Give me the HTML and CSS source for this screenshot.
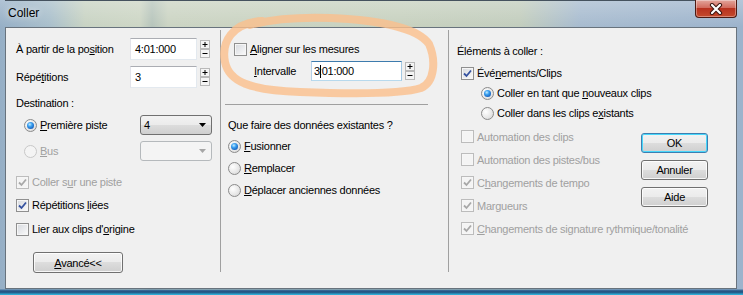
FILE: index.html
```html
<!DOCTYPE html>
<html lang="fr">
<head>
  <meta charset="UTF-8" />
  <meta name="viewport" content="width=device-width, initial-scale=1.0" />
  <title>Coller</title>
  <link rel="stylesheet" href="styles.css">
</head>
<body>
  <div class="window">
    <div class="titlebar">
      <span class="title">Coller</span>
      <div class="close-btn">
        <svg width="14" height="12" viewBox="0 0 14 12">
          <path d="M3 2 L11 10 M11 2 L3 10" stroke="#3b1510" stroke-width="4.2" stroke-linecap="round" fill="none"/>
          <path d="M3 2 L11 10 M11 2 L3 10" stroke="#ffffff" stroke-width="2.2" stroke-linecap="round" fill="none"/>
        </svg>
      </div>
    </div>

    <div class="client">
      <div class="col col-left">
        <div class="row field-row">
          <span class="field-label">À partir de la po<u>s</u>ition</span>
          <div class="textbox">4:01:000</div>
          <svg class="spin" width="10" height="18" viewBox="0 0 10 18">
            <rect x="0.5" y="0.5" width="9" height="8" fill="#f4f4f4" stroke="#b9b9b9"/>
            <rect x="0.5" y="9.5" width="9" height="8" fill="#f4f4f4" stroke="#b9b9b9"/>
            <path d="M5 2v5M2.5 4.5h5M2.5 13.5h5" stroke="#000" stroke-width="1"/>
          </svg>
        </div>
        <div class="row field-row mt4">
          <span class="field-label">Répé<u>t</u>itions</span>
          <div class="textbox">3</div>
          <svg class="spin" width="10" height="18" viewBox="0 0 10 18">
            <rect x="0.5" y="0.5" width="9" height="8" fill="#f4f4f4" stroke="#b9b9b9"/>
            <rect x="0.5" y="9.5" width="9" height="8" fill="#f4f4f4" stroke="#b9b9b9"/>
            <path d="M5 2v5M2.5 4.5h5M2.5 13.5h5" stroke="#000" stroke-width="1"/>
          </svg>
        </div>
        <div class="row caption mt4"><span>Destination :</span></div>
        <div class="row dest-row mt1">
          <span class="opt"><span class="radio on"></span><span><u>P</u>remière piste</span></span>
          <div class="combo">
            <span>4</span>
            <svg width="7" height="4" viewBox="0 0 7 4"><polygon points="0,0 7,0 3.5,4" fill="#000"/></svg>
          </div>
        </div>
        <div class="row dest-row mt4 disabled">
          <span class="opt"><span class="radio"></span><span><u>B</u>us</span></span>
          <div class="combo">
            <span></span>
            <svg width="7" height="4" viewBox="0 0 7 4"><polygon points="0,0 7,0 3.5,4" fill="#a6a6a6"/></svg>
          </div>
        </div>
        <div class="row mt9 disabled">
          <span class="check"><svg viewBox="0 0 11 11"><path d="M2 5.5 L4.5 8 L9 2.5"/></svg></span>
          <span>Coller s<u>u</u>r une piste</span>
        </div>
        <div class="row mt1">
          <span class="check"><svg viewBox="0 0 11 11"><path d="M2 5.5 L4.5 8 L9 2.5"/></svg></span>
          <span>Répétitions <u>l</u>iées</span>
        </div>
        <div class="row mt2">
          <span class="check"></span>
          <span>Lier aux clips d'<u>o</u>rigine</span>
        </div>
        <button class="btn btn-advanced"><u>A</u>vancé&lt;&lt;</button>
      </div>

      <div class="divider"></div>

      <div class="col col-mid">
        <div class="row align-row">
          <span class="check"></span>
          <span><u>A</u>ligner sur les mesures</span>
        </div>
        <div class="row interval-row">
          <span class="interval-label"><u>I</u>ntervalle</span>
          <div class="textbox focused"><span>3</span><span class="caret"></span><span>:01:000</span></div>
          <svg class="spin" width="10" height="18" viewBox="0 0 10 18">
            <rect x="0.5" y="0.5" width="9" height="8" fill="#f4f4f4" stroke="#b9b9b9"/>
            <rect x="0.5" y="9.5" width="9" height="8" fill="#f4f4f4" stroke="#b9b9b9"/>
            <path d="M5 2v5M2.5 4.5h5M2.5 13.5h5" stroke="#000" stroke-width="1"/>
          </svg>
        </div>
        <div class="hline"></div>
        <div class="row caption mt10"><span>Que faire des données existantes ?</span></div>
        <div class="row"><span class="radio on"></span><span><u>F</u>usionner</span></div>
        <div class="row"><span class="radio"></span><span><u>R</u>emplacer</span></div>
        <div class="row"><span class="radio"></span><span><u>D</u>éplacer anciennes données</span></div>
      </div>

      <div class="divider"></div>

      <div class="col col-right">
        <div class="row caption"><span>Éléments à coller :</span></div>
        <div class="row tight mt2 indent-check">
          <span class="check"><svg viewBox="0 0 11 11"><path d="M2 5.5 L4.5 8 L9 2.5"/></svg></span>
          <span>Évé<u>n</u>ements/Clips</span>
        </div>
        <div class="row tight indent-radio"><span class="radio on"></span><span>Coller en tant que <u>n</u>ouveaux clips</span></div>
        <div class="row tight indent-radio"><span class="radio"></span><span>Coller dans les clips e<u>x</u>istants</span></div>

        <div class="paste-grid">
          <div class="row disabled"><span class="check"></span><span>Automation des clips</span></div>
          <div class="buttons">
            <button class="btn btn-default">OK</button>
            <button class="btn">Annuler</button>
            <button class="btn">Aide</button>
          </div>
          <div class="row disabled"><span class="check"></span><span>Automation des pistes/bus</span></div>
          <div class="row disabled">
            <span class="check"><svg viewBox="0 0 11 11"><path d="M2 5.5 L4.5 8 L9 2.5"/></svg></span>
            <span>C<u>h</u>angements de tempo</span>
          </div>
          <div class="row disabled">
            <span class="check"><svg viewBox="0 0 11 11"><path d="M2 5.5 L4.5 8 L9 2.5"/></svg></span>
            <span>Margueurs</span>
          </div>
          <div class="row disabled wide">
            <span class="check"><svg viewBox="0 0 11 11"><path d="M2 5.5 L4.5 8 L9 2.5"/></svg></span>
            <span><u>C</u>hangements de signature rythmique/tonalité</span>
          </div>
        </div>
      </div>
    </div>

    <svg class="scribble" width="743" height="295" viewBox="0 0 743 295">
      <path d="M262 21 C232 23, 221 42, 225 62 C229 82, 250 90, 300 92 C350 94, 402 94, 421 88 C435 82, 436 60, 429 44 C418 28, 380 20, 330 18 C300 17, 272 19, 250 25"
            fill="none" stroke="#fbbf8c" stroke-opacity="0.8" stroke-width="8" stroke-linecap="round"/>
    </svg>
  </div>
</body>
</html>
```

FILE: styles.css
```css
    * {
      margin: 0;
      padding: 0;
      box-sizing: border-box;
    }

    body {
      width: 743px;
      height: 295px;
      overflow: hidden;
      font-family: "Liberation Sans", Arial, sans-serif;
      font-size: 11px;
      letter-spacing: -0.25px;
      color: #000;
      background: #9db4c9;
    }

    .window {
      position: relative;
      width: 743px;
      height: 295px;
      padding: 0 6px 6px 5px;
      display: flex;
      flex-direction: column;
      background:
        linear-gradient(180deg, transparent 289px, #3d6f9c 290px, #1f4d7c 292px, #33bde4 295px),
        linear-gradient(180deg, rgba(255, 255, 255, 0.25), rgba(255, 255, 255, 0) 27px),
        linear-gradient(90deg, #96afc6 0, #a9bfcb 50px, #c8d3c3 85px, #cdd6c5 140px, #b6c4bb 152px, #cbd4c3 168px, #c7d1bf 400px, #c2cdbd 520px, #a7bbcf 580px, #9cb3cc 743px);
    }

    .titlebar {
      height: 27px;
      border-top: 1px solid #45525e;
      display: flex;
      justify-content: space-between;
      align-items: flex-start;
      padding-left: 3px;
    }

    .title {
      font-size: 12px;
      letter-spacing: 0;
      line-height: 25px;
      text-shadow: 0 0 6px rgba(255, 255, 255, 0.9);
    }

    .close-btn {
      width: 42px;
      height: 18px;
      margin-top: -1px;
      border: 1px solid #4d1a12;
      border-top: none;
      border-radius: 0 0 4px 4px;
      background: linear-gradient(#e3a69c 0, #d26c5e 45%, #b8321f 50%, #c44a2c 100%);
      box-shadow: inset 0 0 0 1px rgba(255, 255, 255, 0.35);
      display: flex;
      align-items: center;
      justify-content: center;
    }

    .client {
      flex: 1;
      display: flex;
      background: #f0f0f0;
      border: 1px solid #68737d;
    }

    .divider {
      width: 1px;
      background: #a0a0a0;
      margin: 2px 0 16px;
    }

    .col {
      display: flex;
      flex-direction: column;
    }

    .col-left {
      width: 214px;
      padding: 9px 8px 0 10px;
    }

    .col-mid {
      width: 227px;
      padding: 10px 0 0 7px;
    }

    .col-right {
      flex: 1;
      padding: 13px 28px 0 8px;
    }

    .row {
      display: flex;
      align-items: center;
      height: 22px;
      white-space: nowrap;
    }

    .field-row { height: 24px; }
    .caption { height: 20px; }
    .tight { height: 20px; }

    .mt1 { margin-top: 1px; }
    .mt2 { margin-top: 2px; }
    .mt4 { margin-top: 4px; }
    .mt9 { margin-top: 9px; }
    .mt10 { margin-top: 10px; }

    .disabled {
      color: #a0a0a0;
    }

    .field-label {
      width: 114px;
    }

    .textbox {
      width: 67px;
      height: 22px;
      padding: 0 4px;
      display: flex;
      align-items: center;
      background: #fff;
      border: 1px solid;
      border-color: #abadb3 #e3e9ef #e3e9ef #e2e3ea;
    }

    .textbox.focused {
      width: 91px;
      height: 20px;
      padding: 0 2px;
      border-color: #3d7bad #a4c9e3 #b7d9ed #b5cfe7;
    }

    .caret {
      display: inline-block;
      width: 1px;
      height: 13px;
      background: #000;
      margin-right: -2px;
      position: relative;
      z-index: 1;
    }

    .spin {
      margin-left: 3px;
      flex-shrink: 0;
    }

    .dest-row {
      justify-content: space-between;
    }

    .opt {
      display: flex;
      align-items: center;
      margin-left: 8px;
    }

    .combo {
      width: 72px;
      height: 20px;
      padding: 0 5px 0 3px;
      display: flex;
      align-items: center;
      justify-content: space-between;
      border: 1px solid #707070;
      border-radius: 3px;
      background: linear-gradient(#f2f2f2 0, #ebebeb 50%, #dddddd 50%, #cfcfcf 100%);
    }

    .disabled .combo {
      border-color: #b5b9bc;
      background: #f4f4f4;
    }

    .radio {
      position: relative;
      width: 13px;
      height: 13px;
      flex-shrink: 0;
      margin-right: 3px;
      border-radius: 50%;
      border: 1px solid #8b8b8b;
      background: radial-gradient(circle at 35% 35%, #ffffff, #e6e6e6 60%, #cfcfcf);
    }

    .radio.on::after {
      content: "";
      position: absolute;
      left: 2px;
      top: 2px;
      width: 7px;
      height: 7px;
      border-radius: 50%;
      background: radial-gradient(circle at 40% 35%, #c5ecff 0, #3aa0f0 35%, #1259b8 80%, #0b3f8a);
    }

    .disabled .radio {
      border-color: #c8c8c8;
      background: #f4f4f4;
    }

    .check {
      width: 13px;
      height: 13px;
      flex-shrink: 0;
      margin-right: 3px;
      display: flex;
      align-items: center;
      justify-content: center;
      border: 1px solid #8f8f8f;
      background: linear-gradient(135deg, #d6d9de, #fbfbfb);
      box-shadow: inset 0 0 0 1px #f6f6f6;
    }

    .check svg {
      width: 11px;
      height: 11px;
    }

    .check path {
      fill: none;
      stroke: #3552a0;
      stroke-width: 1.8;
    }

    .disabled .check {
      border-color: #bcbcbc;
      background: #f4f4f4;
    }

    .disabled .check path {
      stroke: #a8a8a8;
    }

    .btn {
      font: inherit;
      letter-spacing: inherit;
      color: #000;
      height: 21px;
      border: 1px solid #707070;
      border-radius: 3px;
      background: linear-gradient(#f2f2f2 0, #ebebeb 50%, #dddddd 50%, #cfcfcf 100%);
      box-shadow: inset 0 0 0 1px rgba(255, 255, 255, 0.8);
    }

    .btn-advanced {
      width: 90px;
      margin: 12px 0 0 17px;
      align-self: flex-start;
    }

    .align-row {
      margin-left: 6px;
    }

    .interval-row {
      margin-left: 26px;
    }

    .interval-label {
      width: 57px;
    }

    .hline {
      width: 203px;
      height: 1px;
      margin: 22px 0 0 -3px;
      background: #a0a0a0;
    }

    .indent-check {
      margin-left: 4px;
    }

    .indent-radio {
      margin-left: 24px;
    }

    .paste-grid {
      display: grid;
      grid-template-columns: 1fr 67px;
      grid-template-rows: repeat(5, 23px);
      margin-top: 2px;
    }

    .paste-grid .row {
      height: 23px;
      margin-left: 4px;
    }

    .paste-grid .wide {
      grid-column: 1 / -1;
    }

    .buttons {
      grid-column: 2;
      grid-row: 1 / span 4;
      display: flex;
      flex-direction: column;
      gap: 7px;
      padding-top: 8px;
    }

    .buttons .btn {
      width: 67px;
      height: 20px;
    }

    .btn-default {
      border-color: #3c7fb1;
      box-shadow: inset 0 0 0 1px #48d7fb;
    }

    .scribble {
      position: absolute;
      left: 0;
      top: 0;
      pointer-events: none;
    }
```
